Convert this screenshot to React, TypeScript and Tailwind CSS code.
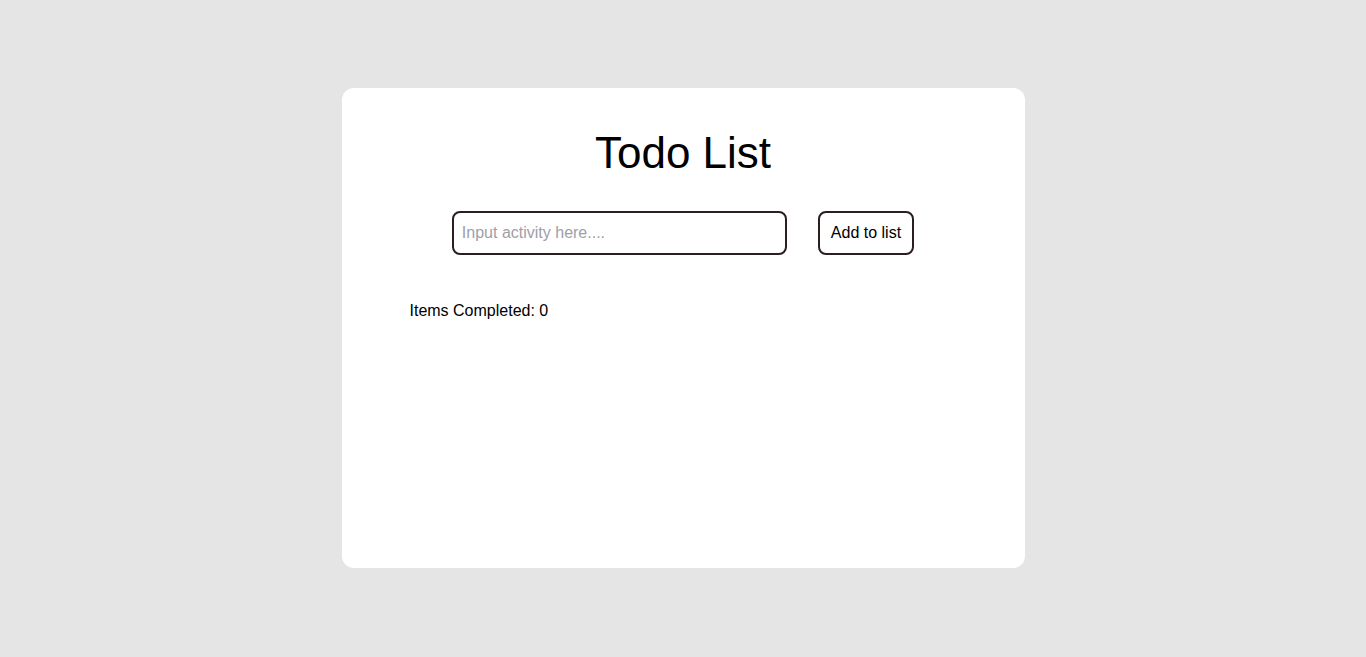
import { useState } from "react";

export default function App() {
  const [text, setText] = useState("");
  const [items, setItems] = useState<string[]>([]);
  const completed = 0;

  const addItem = () => {
    if (!text.trim()) return;
    setItems([...items, text.trim()]);
    setText("");
  };

  return (
    <div
      className="flex min-h-screen items-center justify-center bg-[#e5e5e5] pb-px"
      style={{ fontFamily: '"Liberation Sans", Arial, sans-serif' }}
    >
      <div className="flex h-[480px] w-1/2 flex-col rounded-xl bg-white px-[68px] pt-[41px]">
        <h1 className="text-center text-[44px] leading-[1.1] text-black">Todo List</h1>

        <div className="mt-[34px] flex items-center justify-center gap-[31px]">
          <input
            value={text}
            onChange={(e) => setText(e.target.value)}
            placeholder="Input activity here...."
            className="h-[44px] w-[335px] rounded-lg border-2 border-[#2a1e1f] px-2 text-base text-black outline-none placeholder:text-[#a09ea8]"
          />
          <button
            onClick={addItem}
            className="h-[44px] rounded-lg border-2 border-[#2a1e1f] px-[11px] text-base text-black"
          >
            Add to list
          </button>
        </div>

        <ul className="mt-[47px]">
          {items.map((item, i) => (
            <li key={i} className="text-base text-black">
              {item}
            </li>
          ))}
        </ul>
        <p className="text-base leading-[1.15] text-black">Items Completed: {completed}</p>
      </div>
    </div>
  );
}
